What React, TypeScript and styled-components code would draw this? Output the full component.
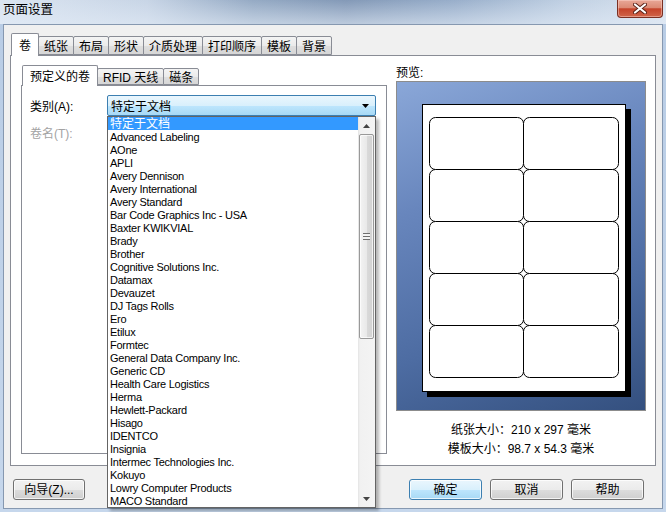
import React from 'react';
import styled, { createGlobalStyle } from 'styled-components';

const UI_FONT = `"Liberation Sans", "Noto Sans CJK SC", sans-serif`;

const GlobalStyle = createGlobalStyle`
  html, body {
    margin: 0;
    padding: 0;
    overflow: hidden;
    background: #c4d5ea;
  }
  * {
    box-sizing: border-box;
  }
`;

const vendors = [
  '特定于文档',
  'Advanced Labeling',
  'AOne',
  'APLI',
  'Avery Dennison',
  'Avery International',
  'Avery Standard',
  'Bar Code Graphics Inc - USA',
  'Baxter KWIKVIAL',
  'Brady',
  'Brother',
  'Cognitive Solutions Inc.',
  'Datamax',
  'Devauzet',
  'DJ Tags Rolls',
  'Ero',
  'Etilux',
  'Formtec',
  'General Data Company Inc.',
  'Generic CD',
  'Health Care Logistics',
  'Herma',
  'Hewlett-Packard',
  'Hisago',
  'IDENTCO',
  'Insignia',
  'Intermec Technologies Inc.',
  'Kokuyo',
  'Lowry Computer Products',
  'MACO Standard',
];

const mainTabs = ['卷', '纸张', '布局', '形状', '介质处理', '打印顺序', '模板', '背景'];
const innerTabs = ['预定义的卷', 'RFID 天线', '磁条'];

const Window = styled.div`
  width: 666px;
  height: 512px;
  display: flex;
  flex-direction: column;
  background: linear-gradient(180deg, #b8cce5 0%, #c6d7ec 100%);
  font-family: ${UI_FONT};
  font-size: 12px;
  color: #000;
`;

const TitleBar = styled.div`
  height: 24px;
  flex: none;
  display: flex;
  align-items: flex-start;
  padding-left: 3px;
  background: linear-gradient(180deg, rgba(255, 255, 255, 0) 0%, rgba(226, 235, 246, 0.6) 100%),
    linear-gradient(90deg, #dbe5f1 0%, #c8d5e6 22%, #95aac4 38%, #8399b7 52%, #98aeca 68%, #c0d0e3 85%, #d8e2ee 100%);
`;

const TitleText = styled.div`
  line-height: 20px;
  font-size: 12.5px;
`;

const CloseButton = styled.div`
  margin-left: auto;
  margin-right: 3px;
  width: 46px;
  height: 18px;
  border: 1px solid #7a2f22;
  border-top: none;
  border-radius: 0 0 4px 4px;
  background: linear-gradient(180deg, #e8a797 0%, #dc8a74 45%, #c5432a 52%, #d0654a 100%);
  box-shadow: inset 0 0 0 1px rgba(255, 220, 210, 0.45);
  display: flex;
  align-items: center;
  justify-content: center;
`;

const Client = styled.div`
  flex: 1;
  margin: 0 3px 3px;
  border: 1px solid #8698b0;
  background: #f0f0f0;
  padding: 8px 6px 0;
  display: flex;
  flex-direction: column;
`;

const TabStrip = styled.div<{ $h: number }>`
  display: flex;
  align-items: flex-end;
  height: ${(p) => p.$h}px;
  padding-left: 1px;
  position: relative;
  z-index: 1;
`;

const Tab = styled.div<{ $active?: boolean; $h: number }>`
  height: ${(p) => (p.$active ? p.$h + 1 : p.$h - 3)}px;
  margin-bottom: ${(p) => (p.$active ? -1 : 0)}px;
  margin-left: -1px;
  padding: 0 ${(p) => (p.$active ? 7 : 5)}px;
  border: 1px solid #898c95;
  border-bottom: ${(p) => (p.$active ? 'none' : '1px solid #898c95')};
  border-radius: 2px 2px 0 0;
  background: ${(p) =>
    p.$active ? '#ffffff' : 'linear-gradient(180deg, #f4f4f4 0%, #ebebeb 50%, #dfdfdf 51%, #d6d6d6 100%)'};
  display: flex;
  align-items: center;
  padding-bottom: ${(p) => (p.$active ? 2 : 0)}px;
  white-space: nowrap;
  position: relative;
  z-index: ${(p) => (p.$active ? 2 : 1)};
  &:first-child {
    margin-left: 0;
  }
`;

const TabPanel = styled.div`
  height: 411px;
  border: 1px solid #898c95;
  background: #ffffff;
  display: flex;
  padding: 9px 9px 11px 10px;
`;

const LeftColumn = styled.div`
  width: 366px;
  display: flex;
  flex-direction: column;
`;

const InnerPanel = styled.div`
  flex: 1;
  border: 1px solid #898c95;
  background: #ffffff;
  padding: 9px 0 0 8px;
`;

const FieldRow = styled.div<{ $gap?: number }>`
  display: flex;
  align-items: center;
  height: 21px;
  margin-top: ${(p) => p.$gap ?? 0}px;
`;

const FieldLabel = styled.div<{ $disabled?: boolean }>`
  width: 77px;
  color: ${(p) => (p.$disabled ? '#a3a3a3' : '#000')};
`;

const ComboWrap = styled.div`
  position: relative;
  width: 269px;
  height: 21px;
`;

const Combo = styled.div`
  height: 100%;
  border: 1px solid #3c7fb1;
  border-radius: 2px;
  background: linear-gradient(180deg, #eaf6fd 0%, #d9f0fc 50%, #bee6fd 51%, #a7d9f5 100%);
  display: flex;
  align-items: center;
  padding-left: 3px;
  padding-right: 6px;
`;

const ComboArrow = styled.svg`
  margin-left: auto;
`;

const ListBox = styled.div`
  position: absolute;
  top: 100%;
  left: 0;
  width: 269px;
  height: 392px;
  border: 1px solid #646464;
  background: #ffffff;
  box-shadow: 3px 3px 3px rgba(0, 0, 0, 0.28);
  display: flex;
  z-index: 10;
`;

const ListItems = styled.div`
  flex: 1;
  overflow: hidden;
`;

const ListItem = styled.div<{ $selected?: boolean }>`
  height: 13px;
  line-height: 14px;
  padding-left: 2px;
  white-space: nowrap;
  letter-spacing: ${(p) => (p.$selected ? 0 : -0.25)}px;
  background: ${(p) => (p.$selected ? '#3399ff' : 'transparent')};
  color: ${(p) => (p.$selected ? '#ffffff' : '#000')};
  font-size: ${(p) => (p.$selected ? 12 : 11)}px;
`;

const Scrollbar = styled.div`
  width: 17px;
  display: flex;
  flex-direction: column;
  background: linear-gradient(90deg, #e4e4e4 0, #f1f1f1 2px, #f4f4f4 100%);
`;

const ScrollArrow = styled.div`
  height: 17px;
  flex: none;
  display: flex;
  align-items: center;
  justify-content: center;
`;

const ScrollTrack = styled.div`
  flex: 1;
  padding: 0 1px;
`;

const ScrollThumb = styled.div`
  height: 205px;
  border: 1px solid #999999;
  border-radius: 2px;
  background: linear-gradient(90deg, #f3f3f3 0%, #e9e9e9 50%, #dadada 51%, #d2d2d2 100%);
  box-shadow: inset 0 0 0 1px rgba(255, 255, 255, 0.7);
  display: flex;
  align-items: center;
  justify-content: center;
`;

const Grip = styled.div`
  width: 7px;
  height: 7px;
  background: repeating-linear-gradient(180deg, #6f6f6f 0, #6f6f6f 1px, #f4f4f4 1px, #f4f4f4 3px);
`;

const RightColumn = styled.div`
  width: 250px;
  margin-left: 9px;
  display: flex;
  flex-direction: column;
`;

const PreviewLabel = styled.div`
  line-height: 16px;
`;

const PreviewBox = styled.div`
  height: 330px;
  border: 1px solid #8c8c8c;
  background: linear-gradient(160deg, #8aa7d8 0%, #6886bd 32%, #4d6ca2 68%, #34507f 100%);
`;

const SizeInfo = styled.div`
  margin-top: 10px;
  text-align: center;
  line-height: 19px;
`;

const ButtonRow = styled.div`
  display: flex;
  gap: 8px;
  margin-top: 13px;
  padding: 0 12px 0 3px;
`;

const Spacer = styled.div`
  flex: 1;
`;

const Button = styled.div<{ $primary?: boolean; $w?: number }>`
  width: ${(p) => p.$w ?? 73}px;
  height: 21px;
  border: 1px solid ${(p) => (p.$primary ? '#3c7fb1' : '#707070')};
  border-radius: 3px;
  background: ${(p) =>
    p.$primary
      ? 'linear-gradient(180deg, #eaf6fd 0%, #d9f0fc 50%, #bee6fd 51%, #a7d9f5 100%)'
      : 'linear-gradient(180deg, #f2f2f2 0%, #ebebeb 50%, #dddddd 51%, #cfcfcf 100%)'};
  box-shadow: inset 0 0 0 1px rgba(255, 255, 255, 0.75);
  display: flex;
  align-items: center;
  justify-content: center;
  line-height: 1;
`;

function LabelSheet() {
  const cols = [32, 126];
  const widths = [94, 95];
  const rows = [35, 87, 139, 191, 243];
  return (
    <svg width="248" height="328" viewBox="0 0 248 328">
      <rect x="30" y="27" width="204" height="288" fill="#000" />
      <rect x="25.5" y="22.5" width="203" height="287" fill="#fff" stroke="#000" />
      {rows.map((y) =>
        cols.map((x, i) => (
          <rect
            key={`${x}-${y}`}
            x={x + 0.5}
            y={y + 0.5}
            width={widths[i]}
            height={52}
            rx="6"
            fill="#fff"
            stroke="#000"
          />
        ))
      )}
    </svg>
  );
}

export default function App() {
  return (
    <Window>
      <GlobalStyle />
      <TitleBar>
        <TitleText>页面设置</TitleText>
        <CloseButton>
          <svg width="14" height="11" viewBox="0 0 14 11">
            <path d="M2 1.5 L12 9.5 M12 1.5 L2 9.5" stroke="#5a2218" strokeWidth="4" strokeLinecap="round" />
            <path d="M2 1.5 L12 9.5 M12 1.5 L2 9.5" stroke="#ffffff" strokeWidth="2.2" strokeLinecap="round" />
          </svg>
        </CloseButton>
      </TitleBar>

      <Client>
        <TabStrip $h={22}>
          {mainTabs.map((t, i) => (
            <Tab key={t} $h={22} $active={i === 0}>
              {t}
            </Tab>
          ))}
        </TabStrip>

        <TabPanel>
          <LeftColumn>
            <TabStrip $h={20}>
              {innerTabs.map((t, i) => (
                <Tab key={t} $h={20} $active={i === 0}>
                  {t}
                </Tab>
              ))}
            </TabStrip>
            <InnerPanel>
              <FieldRow>
                <FieldLabel>类别(A):</FieldLabel>
                <ComboWrap>
                  <Combo>
                    特定于文档
                    <ComboArrow width="7" height="4" viewBox="0 0 7 4">
                      <path d="M0 0 H7 L3.5 4 Z" fill="#000" />
                    </ComboArrow>
                  </Combo>
                  <ListBox>
                    <ListItems>
                      {vendors.map((v, i) => (
                        <ListItem key={v} $selected={i === 0}>
                          {v}
                        </ListItem>
                      ))}
                    </ListItems>
                    <Scrollbar>
                      <ScrollArrow>
                        <svg width="7" height="4" viewBox="0 0 7 4">
                          <path d="M0 4 H7 L3.5 0 Z" fill="#444" />
                        </svg>
                      </ScrollArrow>
                      <ScrollTrack>
                        <ScrollThumb>
                          <Grip />
                        </ScrollThumb>
                      </ScrollTrack>
                      <ScrollArrow>
                        <svg width="7" height="4" viewBox="0 0 7 4">
                          <path d="M0 0 H7 L3.5 4 Z" fill="#444" />
                        </svg>
                      </ScrollArrow>
                    </Scrollbar>
                  </ListBox>
                </ComboWrap>
              </FieldRow>
              <FieldRow $gap={6}>
                <FieldLabel $disabled>卷名(T):</FieldLabel>
              </FieldRow>
            </InnerPanel>
          </LeftColumn>

          <RightColumn>
            <PreviewLabel>预览:</PreviewLabel>
            <PreviewBox>
              <LabelSheet />
            </PreviewBox>
            <SizeInfo>
              <div>纸张大小：210 x 297 毫米</div>
              <div>模板大小：98.7 x 54.3 毫米</div>
            </SizeInfo>
          </RightColumn>
        </TabPanel>

        <ButtonRow>
          <Button $w={72}>向导(Z)...</Button>
          <Spacer />
          <Button $primary>确定</Button>
          <Button>取消</Button>
          <Button>帮助</Button>
        </ButtonRow>
      </Client>
    </Window>
  );
}
